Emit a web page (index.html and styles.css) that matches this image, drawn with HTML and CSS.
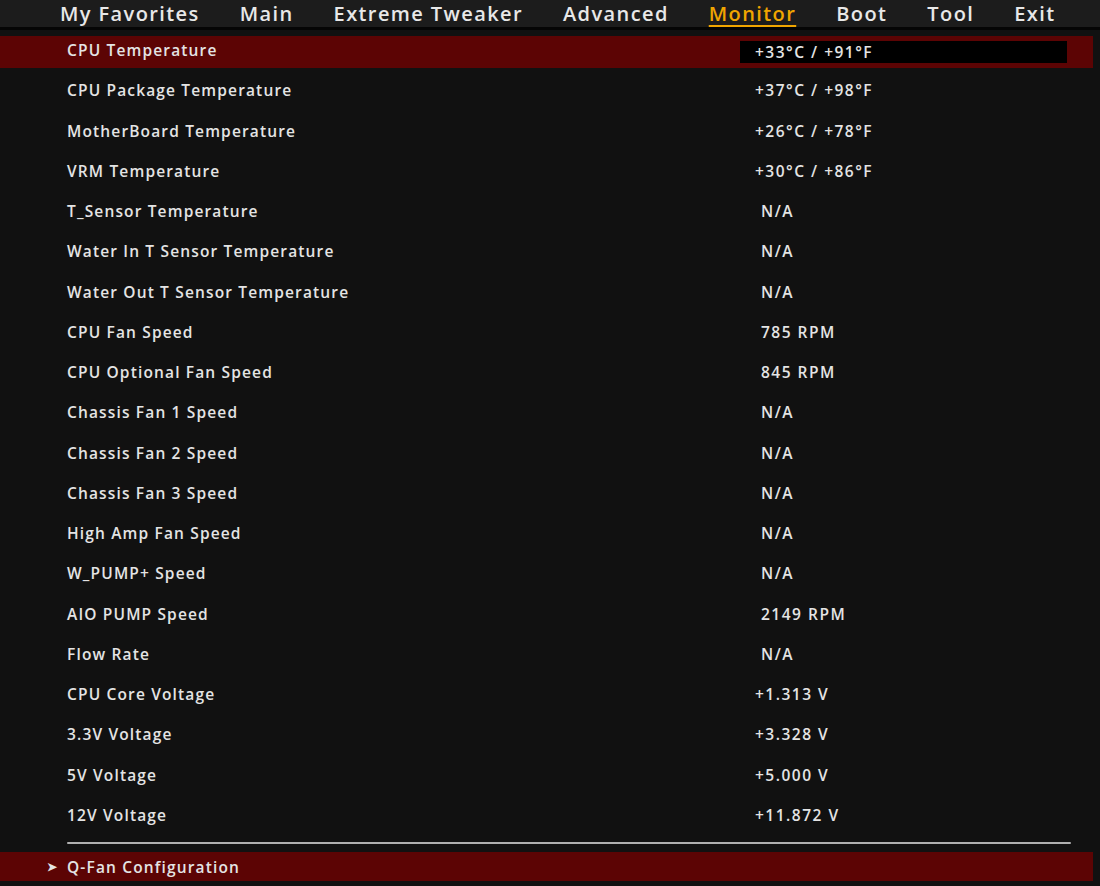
FILE: index.html
```html
<!DOCTYPE html>
<html lang="en">
<head>
    <meta charset="UTF-8">
    <title>Monitor</title>
    <link rel="stylesheet" href="styles.css">
</head>
<body>
    <div class="tabs">
        <span class="tab">My Favorites</span>
        <span class="tab">Main</span>
        <span class="tab">Extreme Tweaker</span>
        <span class="tab">Advanced</span>
        <span class="tab active">Monitor</span>
        <span class="tab">Boot</span>
        <span class="tab">Tool</span>
        <span class="tab">Exit</span>
    </div>

    <div class="list">
        <div class="row selected">
            <span class="label">CPU Temperature</span>
            <span class="value">+33°C / +91°F</span>
        </div>
        <div class="row"><span class="label">CPU Package Temperature</span><span class="value">+37°C / +98°F</span></div>
        <div class="row"><span class="label">MotherBoard Temperature</span><span class="value">+26°C / +78°F</span></div>
        <div class="row"><span class="label">VRM Temperature</span><span class="value">+30°C / +86°F</span></div>
        <div class="row"><span class="label">T_Sensor Temperature</span><span class="value plain">N/A</span></div>
        <div class="row"><span class="label">Water In T Sensor Temperature</span><span class="value plain">N/A</span></div>
        <div class="row"><span class="label">Water Out T Sensor Temperature</span><span class="value plain">N/A</span></div>
        <div class="row"><span class="label">CPU Fan Speed</span><span class="value plain">785 RPM</span></div>
        <div class="row"><span class="label">CPU Optional Fan Speed</span><span class="value plain">845 RPM</span></div>
        <div class="row"><span class="label">Chassis Fan 1 Speed</span><span class="value plain">N/A</span></div>
        <div class="row"><span class="label">Chassis Fan 2 Speed</span><span class="value plain">N/A</span></div>
        <div class="row"><span class="label">Chassis Fan 3 Speed</span><span class="value plain">N/A</span></div>
        <div class="row"><span class="label">High Amp Fan Speed</span><span class="value plain">N/A</span></div>
        <div class="row"><span class="label">W_PUMP+ Speed</span><span class="value plain">N/A</span></div>
        <div class="row"><span class="label">AIO PUMP Speed</span><span class="value plain">2149 RPM</span></div>
        <div class="row"><span class="label">Flow Rate</span><span class="value plain">N/A</span></div>
        <div class="row"><span class="label">CPU Core Voltage</span><span class="value">+1.313 V</span></div>
        <div class="row"><span class="label">3.3V Voltage</span><span class="value">+3.328 V</span></div>
        <div class="row"><span class="label">5V Voltage</span><span class="value">+5.000 V</span></div>
        <div class="row"><span class="label">12V Voltage</span><span class="value">+11.872 V</span></div>
    </div>

    <div class="divider"></div>

    <div class="submenu">
        <span class="arrow">&#10148;</span>
        <span class="label">Q-Fan Configuration</span>
    </div>
</body>
</html>
```

FILE: styles.css
```css
body{
    margin: 0;
    background-color: #111111;
    color: #e4e4e4;
    font-family: "Open Sans", "Noto Sans", sans-serif;
    font-weight: 600;
    overflow: hidden;
}
.tabs{
    display: flex;
    gap: 40px;
    height: 27px;
    padding-left: 60px;
    background-color: #1c1c1c;
    border-bottom: 3px solid #050505;
    align-items: center;
}
.tab{
    font-size: 20px;
    letter-spacing: 1.4px;
    line-height: 27px;
    color: #e8e8e8;
}
.tab.active{
    color: #f0a500;
    text-decoration: underline;
    text-underline-offset: 4px;
    text-decoration-thickness: 2px;
}
.list{
    width: 1093px;
}
.row{
    display: flex;
    align-items: center;
    height: 40.26px;
    font-size: 15.5px;
    letter-spacing: 1.15px;
}
.row.selected{
    background: linear-gradient(to bottom, transparent 6px, #5c0404 6px, #5c0404 38px, transparent 38px);
    align-items: flex-start;
}
.label{
    width: 673px;
    padding-left: 67px;
}
.row.selected .label{
    line-height: 40px;
}
.value{
    padding-left: 15px;
    letter-spacing: 1.5px;
}
.value.plain{
    padding-left: 21px;
}
.row.selected .value{
    margin-top: 11px;
    width: 312px;
    height: 22px;
    line-height: 22px;
    background-color: #000;
}
.divider{
    margin: 7px 0 0 67px;
    width: 1004px;
    height: 2px;
    background-color: #b0b0b0;
    border-radius: 1px;
}
.submenu{
    display: flex;
    align-items: center;
    width: 1093px;
    height: 29px;
    margin-top: 8px;
    background-color: #5c0404;
    font-size: 15.5px;
    letter-spacing: 1.15px;
}
.arrow{
    width: 20px;
    margin-left: 47px;
    font-size: 12px;
}
.submenu .label{
    padding-left: 0;
}
```
